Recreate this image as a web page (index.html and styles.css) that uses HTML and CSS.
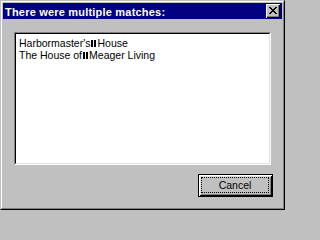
FILE: index.html
```html
<!DOCTYPE html>
<html>
<head>
<meta charset="utf-8">
<link rel="stylesheet" href="styles.css">
</head>
<body>
<div class="window">
  <div class="frame">
    <div class="titlebar">
      <span class="title">There were multiple matches:</span>
      <span class="close">
        <svg width="8" height="7" viewBox="0 0 8 7" shape-rendering="crispEdges"><path fill="#000" d="M0 0h2v1H0z M6 0h2v1H6z M1 1h2v1H1z M5 1h2v1H5z M2 2h4v1H2z M3 3h2v1H3z M2 4h4v1H2z M1 5h2v1H1z M5 5h2v1H5z M0 6h2v1H0z M6 6h2v1H6z"/></svg>
      </span>
    </div>
    <div class="content">
      <div class="listbox">
        <div class="listinner">
          <div class="item">Harbormaster's<span class="sep"></span>House</div>
          <div class="item">The House of<span class="sep"></span>Meager Living</div>
        </div>
      </div>
      <div class="buttons">
        <div class="btn"><div class="focus">Cancel</div></div>
      </div>
    </div>
  </div>
</div>
</body>
</html>
```
FILE: styles.css
```css
html, body {
  margin: 0;
  padding: 0;
  background: #c0c0c0;
}
body {
  font-family: "Liberation Sans", Arial, sans-serif;
  font-size: 10px;
  color: #000;
}
.window {
  width: 285px;
  height: 210px;
  box-sizing: border-box;
  border: 1px solid;
  border-color: #c0c0c0 #000 #000 #c0c0c0;
  background: #c0c0c0;
}
.frame {
  height: 100%;
  box-sizing: border-box;
  border: 1px solid;
  border-color: #fff #808080 #808080 #fff;
  padding: 1px;
  display: flex;
  flex-direction: column;
}
.titlebar {
  height: 16px;
  flex: none;
  background: #000080;
  display: flex;
  align-items: center;
  justify-content: space-between;
  padding: 0 2px;
}
.title {
  color: #fff;
  font-weight: bold;
  font-size: 11px;
  letter-spacing: 0.2px;
  line-height: 16px;
  padding-top: 1px;
}
.close {
  width: 14px;
  height: 14px;
  box-sizing: border-box;
  background: #c0c0c0;
  box-shadow: inset 1px 1px #fff, inset -1px -1px #000, inset -2px -2px #808080;
  display: flex;
  align-items: center;
  justify-content: center;
  padding: 0 1px 1px 0;
}
.close svg {
  display: block;
}
.content {
  flex: 1;
  display: flex;
  flex-direction: column;
  padding: 13px 9px 10px 11px;
}
.listbox {
  height: 133px;
  flex: none;
  box-sizing: border-box;
  margin-right: 2px;
  border: 1px solid;
  border-color: #808080 #fff #fff #808080;
}
.listinner {
  height: 100%;
  box-sizing: border-box;
  border: 1px solid;
  border-color: #000 #dfdfdf #dfdfdf #000;
  background: #fff;
  padding: 3px 3px;
}
.item {
  font-size: 10.5px;
  line-height: 12px;
  height: 12px;
  white-space: nowrap;
}
.sep {
  display: inline-block;
  width: 1px;
  height: 7px;
  border-left: 2px solid #000;
  border-right: 2px solid #000;
  margin: 0 1px 0 1px;
  vertical-align: baseline;
}
.buttons {
  display: flex;
  justify-content: flex-end;
  margin-top: 9px;
}
.btn {
  width: 75px;
  height: 23px;
  box-sizing: border-box;
  border: 1px solid #000;
  box-shadow: inset 1px 1px #fff, inset -1px -1px #000, inset 2px 2px #dfdfdf, inset -2px -2px #808080;
  padding: 2px 3px 3px 2px;
  display: flex;
}
.focus {
  flex: 1;
  border: 1px dotted #000;
  display: flex;
  align-items: center;
  justify-content: center;
  font-size: 10.5px;
}
```
